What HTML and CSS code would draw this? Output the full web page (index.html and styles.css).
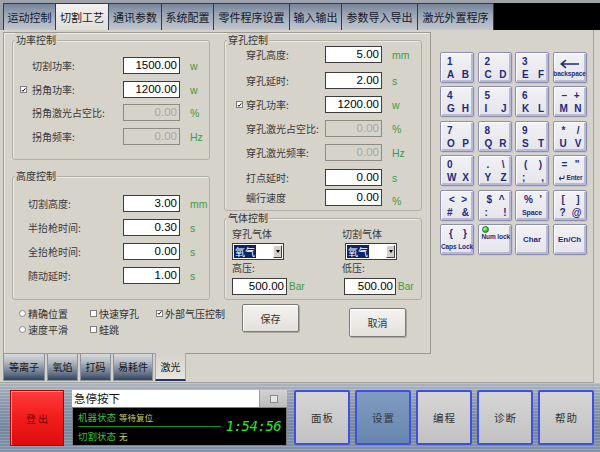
FILE: index.html
```html
<!DOCTYPE html>
<html lang="zh-CN">
<head>
<meta charset="utf-8">
<title>切割工艺</title>
<link rel="stylesheet" href="styles.css">
</head>
<body>
<div class="app">
  <nav class="toptabs">
    <div class="tab w52">运动控制</div>
    <div class="tab w53 active">切割工艺</div>
    <div class="tab w53">通讯参数</div>
    <div class="tab w52">系统配置</div>
    <div class="tab w76">零件程序设置</div>
    <div class="tab w52">输入输出</div>
    <div class="tab w76">参数导入导出</div>
    <div class="tab w76">激光外置程序</div>
    <div class="tabfill"></div>
  </nav>

  <div class="main">
    <div class="leftcol">
      <section class="panel">
        <div class="stack">
          <div class="group g-power">
            <span class="legend">功率控制</span>
            <div class="rows rows-power">
              <div class="row"><span></span><span class="lbl">切割功率:</span><span class="inp">1500.00</span><span class="unit">w</span></div>
              <div class="row"><span class="cb"><svg width="6" height="6" viewBox="0 0 6 6"><path d="M1 3L2.4 4.6L5.2 1" stroke="#111" stroke-width="1.2" fill="none"/></svg></span><span class="lbl">拐角功率:</span><span class="inp">1200.00</span><span class="unit">w</span></div>
              <div class="row"><span></span><span class="lbl">拐角激光占空比:</span><span class="inp dis">0.00</span><span class="unit">%</span></div>
              <div class="row"><span></span><span class="lbl">拐角频率:</span><span class="inp dis">0.00</span><span class="unit">Hz</span></div>
            </div>
          </div>
          <div class="group g-height">
            <span class="legend">高度控制</span>
            <div class="rows rows-height">
              <div class="row"><span></span><span class="lbl">切割高度:</span><span class="inp">3.00</span><span class="unit">mm</span></div>
              <div class="row"><span></span><span class="lbl">半抬枪时间:</span><span class="inp">0.30</span><span class="unit">s</span></div>
              <div class="row"><span></span><span class="lbl">全抬枪时间:</span><span class="inp">0.00</span><span class="unit">s</span></div>
              <div class="row"><span></span><span class="lbl">随动延时:</span><span class="inp">1.00</span><span class="unit">s</span></div>
            </div>
          </div>
        </div>

        <div class="stack stack-right">
          <div class="group g-pierce">
            <span class="legend">穿孔控制</span>
            <div class="rows rows-pierce">
              <div class="row"><span></span><span class="lbl">穿孔高度:</span><span class="inp">5.00</span><span class="unit">mm</span></div>
              <div class="row"><span></span><span class="lbl">穿孔延时:</span><span class="inp">2.00</span><span class="unit">s</span></div>
              <div class="row"><span class="cb"><svg width="6" height="6" viewBox="0 0 6 6"><path d="M1 3L2.4 4.6L5.2 1" stroke="#111" stroke-width="1.2" fill="none"/></svg></span><span class="lbl">穿孔功率:</span><span class="inp">1200.00</span><span class="unit">w</span></div>
              <div class="row"><span></span><span class="lbl">穿孔激光占空比:</span><span class="inp dis">0.00</span><span class="unit">%</span></div>
              <div class="row"><span></span><span class="lbl">穿孔激光频率:</span><span class="inp dis">0.00</span><span class="unit">Hz</span></div>
              <div class="row"><span></span><span class="lbl">打点延时:</span><span class="inp">0.00</span><span class="unit">s</span></div>
              <div class="row"><span></span><span class="lbl">蠕行速度</span><span class="inp">0.00</span><span class="unit low">%</span></div>
            </div>
          </div>
          <div class="group g-gas">
            <span class="legend">气体控制</span>
            <div class="gas">
              <div class="gascol">
                <span class="glbl">穿孔气体</span>
                <div class="select"><span class="sel-txt">氧气</span><span class="sel-arr"></span></div>
                <span class="glbl">高压:</span>
                <div class="ginp"><span class="inp w55">500.00</span><span class="unit bar">Bar</span></div>
              </div>
              <div class="gascol">
                <span class="glbl">切割气体</span>
                <div class="select"><span class="sel-txt">氧气</span><span class="sel-arr"></span></div>
                <span class="glbl">低压:</span>
                <div class="ginp"><span class="inp w52">500.00</span><span class="unit bar">Bar</span></div>
              </div>
            </div>
          </div>
        </div>

        <div class="opts">
          <span class="opt"><span class="rb"></span>精确位置</span>
          <span class="opt"><span class="cb"></span>快速穿孔</span>
          <span class="opt"><span class="cb"><svg width="6" height="6" viewBox="0 0 6 6"><path d="M1 3L2.4 4.6L5.2 1" stroke="#111" stroke-width="1.2" fill="none"/></svg></span>外部气压控制</span>
          <span class="opt"><span class="rb"></span>速度平滑</span>
          <span class="opt"><span class="cb"></span>蛙跳</span>
        </div>
        <div class="btns">
          <button class="btn save">保存</button>
          <button class="btn cancel">取消</button>
        </div>
      </section>

      <nav class="subtabs">
        <div class="stab w42">等离子</div>
        <div class="stab w31">氧焰</div>
        <div class="stab w31">打码</div>
        <div class="stab w40">易耗件</div>
        <div class="stab w31 active">激光</div>
      </nav>
    </div>

    <div class="keypad">
      <div class="keys">
        <div class="key"><div class="kt"><span>1</span></div><div class="kb"><span>A</span><span>B</span></div></div>
        <div class="key"><div class="kt"><span>2</span></div><div class="kb"><span>C</span><span>D</span></div></div>
        <div class="key"><div class="kt"><span>3</span></div><div class="kb"><span>E</span><span>F</span></div></div>
        <div class="key kc"><svg width="20" height="10" viewBox="0 0 20 10"><path d="M1 5H19M6 1.2L1.2 5L6 8.8" stroke="#1e2a80" stroke-width="1.6" fill="none"/></svg><span class="tiny">backspace</span></div>

        <div class="key"><div class="kt"><span>4</span></div><div class="kb"><span>G</span><span>H</span></div></div>
        <div class="key"><div class="kt"><span>5</span></div><div class="kb"><span>I</span><span>J</span></div></div>
        <div class="key"><div class="kt"><span>6</span></div><div class="kb"><span>K</span><span>L</span></div></div>
        <div class="key"><div class="kt two"><span>–</span><span>+</span></div><div class="kb"><span>M</span><span>N</span></div></div>

        <div class="key"><div class="kt"><span>7</span></div><div class="kb"><span>O</span><span>P</span></div></div>
        <div class="key"><div class="kt"><span>8</span></div><div class="kb"><span>Q</span><span>R</span></div></div>
        <div class="key"><div class="kt"><span>9</span></div><div class="kb"><span>S</span><span>T</span></div></div>
        <div class="key"><div class="kt two"><span>*</span><span>/</span></div><div class="kb"><span>U</span><span>V</span></div></div>

        <div class="key"><div class="kt"><span>0</span></div><div class="kb"><span>W</span><span>X</span></div></div>
        <div class="key"><div class="kt two"><span>.</span><span>\</span></div><div class="kb"><span>Y</span><span>Z</span></div></div>
        <div class="key"><div class="kt two"><span>(</span><span>)</span></div><div class="kb"><span>;</span><span>,</span></div></div>
        <div class="key"><div class="kt two"><span>=</span><span>"</span></div><div class="kb kbs"><svg width="7" height="6" viewBox="0 0 7 6"><path d="M6 0.5V3.5H1.2M3 1.7L1 3.5L3 5.3" stroke="#1e2a80" stroke-width="1" fill="none"/></svg><span class="tiny">Enter</span></div></div>

        <div class="key"><div class="kt two"><span>&lt;</span><span>&gt;</span></div><div class="kb"><span>#</span><span>&amp;</span></div></div>
        <div class="key"><div class="kt two"><span>$</span><span>^</span></div><div class="kb"><span>:</span><span>!</span></div></div>
        <div class="key"><div class="kt two"><span>%</span><span>'</span></div><div class="kb kbc"><span class="tiny b">Space</span></div></div>
        <div class="key"><div class="kt two"><span>[</span><span>]</span></div><div class="kb"><span>?</span><span>@</span></div></div>

        <div class="key"><div class="kt two"><span>{</span><span>}</span></div><div class="kb kbc"><span class="tiny">Caps Lock</span></div></div>
        <div class="key knum"><span class="led"></span><span class="tiny">Num lock</span></div>
        <div class="key kc"><span class="small">Char</span></div>
        <div class="key kc"><span class="small">En/Ch</span></div>
      </div>
    </div>
  </div>

  <footer class="footer">
    <button class="logout">登出</button>
    <div class="msg">
      <div class="msgbar"><span class="msgtxt">急停按下</span><span class="msgbtn"><span class="sq"></span></span></div>
      <div class="status">
        <div class="st-left">
          <div class="st-line"><span class="st-k">机器状态</span><span class="st-v">等待复位</span></div>
          <div class="st-rule"></div>
          <div class="st-line"><span class="st-k">切割状态</span><span class="st-v">无</span></div>
        </div>
        <div class="st-time">1:54:56</div>
      </div>
    </div>
    <div class="navs">
      <button class="nav">面板</button>
      <button class="nav active">设置</button>
      <button class="nav">编程</button>
      <button class="nav">诊断</button>
      <button class="nav">帮助</button>
    </div>
  </footer>
</div>
</body>
</html>
```
FILE: styles.css
```css
* { box-sizing: border-box; margin: 0; padding: 0; }
html, body { width: 600px; height: 452px; overflow: hidden; }
body {
  background: #d6d3cb;
  font-family: "Noto Sans CJK SC", "Liberation Sans", sans-serif;
  font-size: 10px;
  color: #333;
}
.app { width: 600px; height: 452px; display: flex; flex-direction: column; }

/* top tabs */
.toptabs {
  height: 30px;
  display: flex;
  padding: 3px 0 0 3px;
  background: #9ea3ab;
}
.tab {
  height: 27px;
  border: 1px solid #2f3b50;
  border-bottom: none;
  border-right: none;
  background: linear-gradient(180deg, #75839a 0%, #97a2b2 35%, #c3c8cf 100%);
  color: #14182a;
  font-size: 11px;
  line-height: 26px;
  text-align: center;
  white-space: nowrap;
}
.tab.active { background: linear-gradient(180deg, #f2f1ed 0%, #e0ded8 100%); }
.w52 { width: 52px; } .w53 { width: 53px; } .w76 { width: 76px; }
.tabfill { flex: 1; background: #000; border-left: 1px solid #2f3b50; }

/* main */
.main {
  height: 353px;
  width: 594px;
  display: flex;
  border-right: 1px solid #a5a29b;
  border-bottom: 1px solid #a5a29b;
}
.leftcol { width: 431px; padding: 2px 0 0 3px; display: flex; flex-direction: column; }
.panel {
  width: 428px;
  height: 322px;
  border: 1px solid #9c9992;
  box-shadow: inset 1px 1px 0 #eeece6;
  padding: 7px 0 0 8px;
  display: grid;
  grid-template-columns: 198px 198px;
  column-gap: 14px;
  align-content: start;
}
.stack { display: flex; flex-direction: column; gap: 16px; }
.stack-right { gap: 7px; }

.group {
  border: 1px solid #b3b0a8;
  border-radius: 3px;
  box-shadow: inset 1px 1px 0 #ebe9e3;
}
.g-power { height: 120px; }
.g-height { height: 124px; }
.g-pierce { height: 171px; }
.g-gas { height: 82px; }
.legend {
  display: block;
  width: fit-content;
  height: 14px;
  line-height: 14px;
  margin: -8px 0 0 2px;
  padding: 0 1px;
  background: #d6d3cb;
  color: #333;
  font-size: 10px;
}

.rows { display: grid; padding-left: var(--pl); }
.rows-power { --pl: 7px; --c1: 12px; --c2: 91px; margin-top: 10px; grid-template-rows: 24px 23px 24px 17px; }
.rows-height { --pl: 15px; --c1: 0px; --c2: 95px; margin-top: 12px; grid-template-rows: 24px 24px 24px 17px; }
.rows-pierce { --pl: 11px; --c1: 10px; --c2: 79px; margin-top: -1px; grid-template-rows: 26px 24px 24px 24px 25px 18px 17px; }
.row {
  height: 17px;
  display: grid;
  grid-template-columns: var(--c1) var(--c2) 57px auto;
  align-items: center;
}
.lbl { white-space: nowrap; color: #3a3a3a; font-size: 10px; }
.inp {
  display: block;
  width: 57px;
  height: 17px;
  border: 1px solid #3c3c3c;
  background: #fff;
  color: #000;
  text-align: right;
  padding-right: 2px;
  font-family: "Liberation Sans", sans-serif;
  font-size: 11.5px;
  line-height: 15px;
}
.inp.dis { background: #d6d3cb; color: #a9a7a1; border-color: #8c8a85; }
.inp.w55 { width: 55px; }
.inp.w52 { width: 52px; }
.unit {
  margin-left: 10px;
  color: #3e9c3e;
  font-family: "Liberation Sans", sans-serif;
  font-size: 10.5px;
}
.unit.low { margin-top: 8px; }
.unit.bar { margin-left: 2px; font-size: 10px; }

.cb {
  display: inline-flex;
  width: 7px;
  height: 7px;
  border: 1px solid #7d7d7d;
  background: #fff;
  align-items: center;
  justify-content: center;
}
.cb svg { display: block; }
.rb {
  display: inline-block;
  width: 7px;
  height: 7px;
  border: 1px solid #8a8a8a;
  border-radius: 50%;
  background: #fafafa;
}

/* gas */
.gas { display: flex; padding-left: 7px; margin-top: 2px; }
.gascol { display: flex; flex-direction: column; align-items: flex-start; }
.gascol:first-child { width: 112px; }
.glbl { height: 14px; line-height: 14px; font-size: 10px; color: #3a3a3a; }
.gascol:last-child .glbl { margin-left: -2px; }
.select {
  margin: 2px 0 1px 0;
  width: 52px;
  height: 17px;
  border: 1px solid #3c3c3c;
  background: #fff;
  display: flex;
  padding: 1px;
}
.gascol:last-child .select { margin-left: 1px; }
.sel-txt {
  width: 22px;
  background: #0a246a;
  color: #fff;
  font-size: 10px;
  line-height: 13px;
  padding-left: 1px;
}
.sel-arr {
  margin-left: auto;
  width: 9px;
  background: #d4d0c8;
  border: 1px solid;
  border-color: #fff #404040 #404040 #fff;
  display: flex;
  align-items: center;
  justify-content: center;
}
.sel-arr::after {
  content: "";
  border-top: 3px solid #000;
  border-left: 2.5px solid transparent;
  border-right: 2.5px solid transparent;
}
.ginp { display: flex; align-items: center; margin-top: 3px; }

/* options & buttons */
.opts {
  margin-top: 5px;
  padding-left: 7px;
  display: grid;
  grid-template-columns: 71px 66px auto;
  grid-auto-rows: 16px;
}
.opt { display: flex; align-items: center; gap: 2px; font-size: 10px; color: #333; white-space: nowrap; }
.btns { display: flex; align-items: flex-start; padding-left: 18px; margin-top: 4px; gap: 50px; }
.btn {
  width: 57px;
  height: 28px;
  border: 1px solid #7c7a76;
  border-radius: 2px;
  background: linear-gradient(180deg, #f4f3f0 0%, #e2e0db 100%);
  box-shadow: inset 1px 1px 0 #fff, 1px 1px 0 #a9a7a1;
  font-family: "Noto Sans CJK SC", sans-serif;
  font-size: 10px;
  color: #333;
}
.btn.cancel { margin-top: 4px; height: 29px; }

/* subtabs */
.subtabs { height: 27px; display: flex; gap: 2px; }
.stab {
  height: 27px;
  border: 1px solid #8a93a0;
  border-top: none;
  background: linear-gradient(180deg, #d8dadc 0%, #b4bac2 30%, #66758a 75%, #33445c 100%);
  color: #151515;
  font-size: 10px;
  line-height: 14px;
  padding-top: 6px;
  text-align: center;
}
.stab.active {
  margin-top: -1px;
  height: 28px;
  padding-top: 7px;
  background: linear-gradient(180deg, #d6d3cb 0%, #e6e4df 100%);
  border-color: #a9a6a0;
  border-bottom: 2px solid #23346e;
}
.w42 { width: 42px; } .w31 { width: 31px; } .w40 { width: 40px; }

/* keypad */
.keypad { flex: 1; padding: 22px 0 0 9px; }
.keys {
  display: grid;
  grid-template-columns: repeat(4, 34px);
  grid-auto-rows: 31px;
  column-gap: 3.5px;
  row-gap: 3.4px;
}
.key {
  border: 1px solid #8d8db0;
  border-radius: 2px;
  background: linear-gradient(180deg, #f2f2f5 0%, #e4e4ea 100%);
  box-shadow: inset 1px 1px 0 #fff, inset -2px -2px 0 #b9b9cf, 1px 1px 0 #c6c6d4;
  color: #1e2a80;
  font-family: "Liberation Sans", sans-serif;
  font-weight: bold;
  font-size: 10px;
  padding-top: 3px;
}
.kt, .kb { height: 11px; line-height: 11px; display: flex; }
.kt { padding-left: 6px; }
.kt.two { justify-content: space-between; padding: 0 6px 0 8px; }
.kb { margin-top: 2px; justify-content: space-between; padding: 0 4px 0 6px; }
.kbs { justify-content: center; align-items: center; gap: 1px; padding: 0 2px 0 4px; }
.kbc { justify-content: center; padding: 0; }
.tiny { font-size: 6.5px; font-weight: bold; letter-spacing: -0.1px; white-space: nowrap; }
.tiny.b { font-size: 7px; }
.small { font-size: 8px; font-weight: bold; }
.kc { display: flex; flex-direction: column; align-items: center; justify-content: center; padding-top: 0; gap: 1px; }
.knum { display: flex; flex-direction: column; padding: 1px 0 0 3px; }
.led {
  width: 7px;
  height: 7px;
  border-radius: 50%;
  background: radial-gradient(circle at 35% 35%, #b8ff9a 0%, #38c82a 55%, #1b7a12 100%);
  border: 1px solid #2f6a2a;
}

/* footer */
.footer {
  flex: 1;
  display: flex;
  align-items: flex-start;
  padding: 7px 0 0 10px;
  background:
    repeating-linear-gradient(180deg, rgba(255,255,255,0.10) 0px, rgba(255,255,255,0.10) 1px, rgba(0,0,0,0.06) 1px, rgba(0,0,0,0.06) 3px),
    linear-gradient(180deg, #b6bec9 0%, #93a1b4 30%, #7a8ca6 65%, #8c9cb1 100%);
}
.logout {
  width: 54px;
  height: 56px;
  margin-right: 8px;
  border: 1px solid #9a0c0c;
  background: linear-gradient(180deg, #ff3b3b 0%, #f21c1c 50%, #dc0d0d 100%);
  box-shadow: inset 1px 1px 0 #ff8a8a;
  color: #7a0000;
  font-family: "Noto Sans CJK SC", sans-serif;
  font-size: 10px;
  letter-spacing: 2px;
  padding-left: 2px;
}
.msg { width: 215px; height: 56px; margin-right: 7px; display: flex; flex-direction: column; }
.msgbar { height: 17px; background: #fff; display: flex; align-items: stretch; }
.msgtxt { flex: 1; font-size: 11.5px; line-height: 17px; color: #111; padding-left: 2px; }
.msgbtn {
  width: 28px;
  background: linear-gradient(180deg, #d2d2d2, #bcbcbc);
  border-left: 1px solid #9a9a9a;
  display: flex;
  align-items: center;
  justify-content: center;
}
.sq { width: 8px; height: 8px; border: 1px solid #8a8a8a; background: #e6e6e6; }
.status {
  flex: 1;
  background: #000;
  border: 1px solid #7e7e7e;
  display: flex;
  padding-left: 5px;
}
.st-left { width: 143px; display: flex; flex-direction: column; }
.st-line { height: 18px; display: flex; align-items: center; gap: 3px; }
.st-k { color: #3cc03c; font-size: 9.5px; }
.st-v { color: #cfd36a; font-size: 8.5px; }
.st-rule { height: 1px; background: #1f8a1f; }
.st-time {
  flex: 1;
  display: flex;
  align-items: center;
  justify-content: center;
  color: #2ee22e;
  font-family: "DejaVu Sans Mono", monospace;
  font-style: italic;
  font-size: 14px;
  letter-spacing: -0.5px;
  padding-bottom: 2px;
}
.navs { display: flex; gap: 5px; }
.nav {
  width: 56px;
  height: 55px;
  border: 2px solid #3f4fe0;
  border-radius: 2px;
  background: linear-gradient(180deg, #d6d6d6 0%, #c2c2c2 100%);
  color: #333;
  font-family: "Noto Sans CJK SC", sans-serif;
  font-size: 10.5px;
  letter-spacing: 1px;
  padding-left: 1px;
}
.nav.active { background: linear-gradient(180deg, #7f9cc2 0%, #6886ae 100%); }
```
